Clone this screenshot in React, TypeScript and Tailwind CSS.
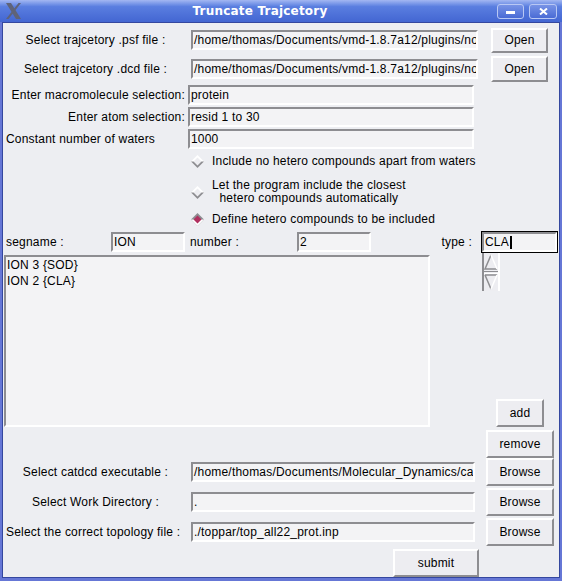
import React from "react";

const sunken =
  "border-2 border-t-[#8d8d91] border-l-[#8d8d91] border-b-white border-r-white bg-[#f3f3f5]";
const raised =
  "border-2 border-t-white border-l-white border-b-[#8d8d91] border-r-[#8d8d91] bg-[#ededf1]";

const Entry = ({ value, className = "" }: { value: string; className?: string }) => (
  <div
    className={`${sunken} h-[20px] overflow-hidden whitespace-nowrap pl-[1px] text-[12px] leading-[16px] ${className}`}
  >
    {value}
  </div>
);

const Btn = ({ label, className = "" }: { label: string; className?: string }) => (
  <button type="button" className={`${raised} text-[12px] leading-[16px] text-black ${className}`}>
    {label}
  </button>
);

const Diamond = ({ selected }: { selected?: boolean }) => {
  const top = selected ? "#8d8d91" : "#ffffff";
  const bottom = selected ? "#ffffff" : "#8d8d91";
  const center = selected ? "#b03060" : "#ededf1";
  return (
    <svg width="13" height="13" viewBox="0 0 13 13" className="shrink-0">
      <polygon points="6.5,0 13,6.5 6.5,13 0,6.5" fill={top} />
      <polygon points="0,6.5 13,6.5 6.5,13" fill={bottom} />
      <polygon points="6.5,2.5 10.5,6.5 6.5,10.5 2.5,6.5" fill={center} />
    </svg>
  );
};

const TitleBar = () => (
  <div className="flex h-[22px] items-center bg-linear-to-b from-[#a3b7f2] via-[#5a7ee0] via-30% to-[#4366d2]">
    <div className="flex w-[26px] justify-center pl-[1px]">
      <svg width="17" height="18" viewBox="0 0 17 18">
        <polygon points="1,1 6,1 16,17 11,17" fill="#5f6378" />
        <polygon points="13.5,1 16,1 3.5,17 1,17" fill="#5f6378" />
      </svg>
    </div>
    <div className="flex-1 text-center font-['DejaVu_Sans',sans-serif] text-[12px] font-bold text-white">
      Truncate Trajcetory
    </div>
    <div className="flex w-[68px] gap-[5px] pl-[3px]">
      <div className="flex h-[15px] w-[27px] items-center justify-center rounded-[3px] border border-[#b9c8f4] bg-linear-to-b from-[#7893e6] to-[#4a6bd5]">
        <div className="mt-[2px] h-[3px] w-[9px] bg-white" />
      </div>
      <div className="flex h-[15px] w-[28px] items-center justify-center rounded-[3px] border border-[#b9c8f4] bg-linear-to-b from-[#7893e6] to-[#4a6bd5]">
        <svg width="9" height="7" viewBox="0 0 9 7">
          <path d="M1 0.5 L8 6.5 M8 0.5 L1 6.5" stroke="white" strokeWidth="2" />
        </svg>
      </div>
    </div>
  </div>
);

const ScrollArrows = () => (
  <svg width="18" height="38" viewBox="0 0 18 38">
    <rect x="0" y="0" width="18" height="38" fill="#ededf1" />
    <rect x="0" y="0" width="2" height="38" fill="#8d8d91" />
    <rect x="16" y="0" width="2" height="38" fill="#ffffff" />
    <path d="M9 2 L3 16 L15 16" fill="none" stroke="#8d8d91" strokeWidth="1.5" />
    <path d="M9 2 L15 16" fill="none" stroke="#ffffff" strokeWidth="1.5" />
    <rect x="2" y="18" width="14" height="1" fill="#8d8d91" />
    <rect x="2" y="20" width="14" height="1" fill="#ffffff" />
    <path d="M3 22 L15 22 M3 22 L9 36" fill="none" stroke="#8d8d91" strokeWidth="1.5" />
    <path d="M15 22 L9 36" fill="none" stroke="#ffffff" strokeWidth="1.5" />
  </svg>
);

export default function App() {
  return (
    <div className="flex h-[581px] w-[562px] flex-col bg-[#6677d6] font-['Liberation_Sans',Arial,sans-serif] text-[12px] tracking-[0.2px] text-black">
      <TitleBar />
      <div className="mx-[2px] mb-[3px] flex flex-1 flex-col border border-[#34479f] bg-[#edeef2]">
        {/* file pickers */}
        <div className="mt-[4px] flex h-[26px] items-center">
          <div className="w-[185px] text-center">Select trajcetory .psf file :</div>
          <Entry className="ml-[3px] w-[287px]" value="/home/thomas/Documents/vmd-1.8.7a12/plugins/no" />
          <Btn label="Open" className="ml-[13px] h-[25px] w-[57px]" />
        </div>
        <div className="mt-[3px] flex h-[26px] items-center">
          <div className="w-[185px] text-center">Select trajcetory .dcd file :</div>
          <Entry className="ml-[3px] w-[287px]" value="/home/thomas/Documents/vmd-1.8.7a12/plugins/no" />
          <Btn label="Open" className="ml-[13px] h-[26px] w-[57px]" />
        </div>

        {/* selections */}
        <div className="mt-[2px] flex h-[22px] items-center">
          <div className="w-[185px] pr-[3px] text-right">Enter macromolecule selection:</div>
          <Entry className="w-[286px]" value="protein" />
        </div>
        <div className="flex h-[22px] items-center">
          <div className="w-[185px] pr-[3px] text-right">Enter atom selection:</div>
          <Entry className="w-[286px]" value="resid 1 to 30" />
        </div>
        <div className="flex h-[22px] items-center">
          <div className="w-[185px] pl-[3px]">Constant number of waters</div>
          <Entry className="w-[286px]" value="1000" />
        </div>

        {/* hetero options */}
        <div className="ml-[188px] mt-[2px] flex h-[18px] items-center gap-[8px]">
          <Diamond />
          <span>Include no hetero compounds apart from waters</span>
        </div>
        <div className="ml-[188px] mt-[6px] flex h-[32px] items-center gap-[8px]">
          <Diamond />
          <span className="text-center leading-[13px]">
            Let the program include the closest
            <br />
            hetero compounds automatically
          </span>
        </div>
        <div className="ml-[188px] flex h-[22px] items-center gap-[8px]">
          <Diamond selected />
          <span>Define hetero compounds to be included</span>
        </div>

        {/* segment row */}
        <div className="mt-[1px] flex h-[22px] items-center">
          <div className="w-[107px] pl-[3px]">segname :</div>
          <div className="border border-[#edeef2]">
            <Entry className="w-[74px]" value="ION" />
          </div>
          <div className="w-[110px] pl-[4px]">number :</div>
          <div className="border border-[#edeef2]">
            <Entry className="w-[74px]" value="2" />
          </div>
          <div className="w-[109px] pr-[9px] text-right">type :</div>
          <div className="border border-black">
            <div className={`${sunken} flex h-[20px] w-[75px] items-center pl-[1px] leading-[16px]`}>
              CLA
              <span className="ml-[1px] inline-block h-[13px] w-[2px] bg-black" />
            </div>
          </div>
        </div>

        {/* list */}
        <div className="flex h-[174px]">
          <div className={`${sunken} ml-[1px] mt-[2px] h-[172px] w-[426px] pl-[1px] leading-[16px]`}>
            <div>ION 3 {"{SOD}"}</div>
            <div>ION 2 {"{CLA}"}</div>
          </div>
          <div className="flex w-[129px] flex-col">
            <div className="ml-[52px]">
              <ScrollArrows />
            </div>
            <Btn label="add" className="ml-[66px] mt-auto h-[28px] w-[48px]" />
          </div>
        </div>
        <Btn label="remove" className="ml-[483px] mt-[3px] h-[28px] w-[68px]" />

        {/* paths */}
        <div className="flex h-[28px] items-center">
          <div className="w-[185px] text-center">Select catdcd executable :</div>
          <Entry className="ml-[3px] w-[284px]" value="/home/thomas/Documents/Molecular_Dynamics/ca" />
          <Btn label="Browse" className="ml-[11px] h-[28px] w-[68px]" />
        </div>
        <div className="mt-[2px] flex h-[28px] items-center">
          <div className="w-[185px] text-center">Select Work Directory :</div>
          <Entry className="ml-[3px] w-[284px]" value="." />
          <Btn label="Browse" className="ml-[11px] h-[28px] w-[68px]" />
        </div>
        <div className="mt-[2px] flex h-[28px] items-center">
          <div className="w-[185px] pl-[3px]">Select the correct topology file :</div>
          <Entry className="ml-[3px] w-[284px]" value="./toppar/top_all22_prot.inp" />
          <Btn label="Browse" className="ml-[11px] h-[28px] w-[68px]" />
        </div>

        <Btn label="submit" className="ml-[390px] mt-[3px] h-[28px] w-[86px]" />
      </div>
    </div>
  );
}
